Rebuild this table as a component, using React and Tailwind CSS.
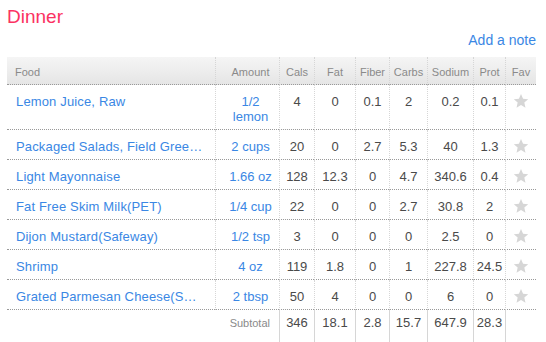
import React from "react";

const foods = [
  { name: "Lemon Juice, Raw", amount: "1/2 lemon", vals: ["4", "0", "0.1", "2", "0.2", "0.1"] },
  { name: "Packaged Salads, Field Gree…", amount: "2 cups", vals: ["20", "0", "2.7", "5.3", "40", "1.3"] },
  { name: "Light Mayonnaise", amount: "1.66 oz", vals: ["128", "12.3", "0", "4.7", "340.6", "0.4"] },
  { name: "Fat Free Skim Milk(PET)", amount: "1/4 cup", vals: ["22", "0", "0", "2.7", "30.8", "2"] },
  { name: "Dijon Mustard(Safeway)", amount: "1/2 tsp", vals: ["3", "0", "0", "0", "2.5", "0"] },
  { name: "Shrimp", amount: "4 oz", vals: ["119", "1.8", "0", "1", "227.8", "24.5"] },
  { name: "Grated Parmesan Cheese(S…", amount: "2 tbsp", vals: ["50", "4", "0", "0", "6", "0"] },
];

const subtotal = ["346", "18.1", "2.8", "15.7", "647.9", "28.3"];

const numCols = [
  { label: "Cals", w: "w-[35px]" },
  { label: "Fat", w: "w-[41px]" },
  { label: "Fiber", w: "w-[34px]" },
  { label: "Carbs", w: "w-[38px]" },
  { label: "Sodium", w: "w-[46px]" },
  { label: "Prot", w: "w-[32px]" },
];

function Star() {
  return (
    <svg width="16" height="16" viewBox="0 0 24 24" className="mx-auto block">
      <polygon
        points="12,1.5 15.1,8.6 22.8,9.3 17,14.4 18.7,22 12,18 5.3,22 7,14.4 1.2,9.3 8.9,8.6"
        fill="#d6d6d6"
      />
    </svg>
  );
}

export default function App() {
  const th = "h-[28px] border-b border-dotted border-b-[#999] pt-[3px] font-normal text-[11px] text-[#8a8a8a]";
  const td = "align-top pt-[9px] pb-[5px] leading-[15px] border-b border-dotted border-b-[#999]";
  const vline = "border-l border-l-[#d6d6d6]";

  return (
    <div className="w-[546px] h-[342px] overflow-hidden bg-white font-['Liberation_Sans',Arial,sans-serif]">
      <div className="pl-[7px] pt-[5px] text-[19px] leading-[24px] text-[#fb3262]">Dinner</div>
      <div className="mt-[3px] pr-[10px] text-right text-[14px] leading-[16px] text-[#3a87e4]">
        Add a note
      </div>
      <table className="ml-[7px] mt-[9px] w-[529px] table-fixed border-separate border-spacing-0">
        <thead>
          <tr className="bg-linear-to-b from-[#f5f5f5] to-[#e5e5e5]">
            <th className={`${th} w-[208px] pl-[8px] text-left`}>Food</th>
            <th className={`${th} ${vline} w-[64px] pl-[8px] pr-[2px] text-center`}>Amount</th>
            {numCols.map((c) => (
              <th key={c.label} className={`${th} ${vline} ${c.w} text-center`}>
                {c.label}
              </th>
            ))}
            <th className={`${th} ${vline} w-[31px] text-center`}>Fav</th>
          </tr>
        </thead>
        <tbody className="text-[13px]">
          {foods.map((f) => (
            <tr key={f.name}>
              <td className={`${td} pl-[9px] pr-[2px] text-[#3a87e4] whitespace-nowrap tracking-[0.15px]`}>
                {f.name}
              </td>
              <td className={`${td} ${vline} pl-[8px] pr-[2px] text-center text-[#3a87e4]`}>{f.amount}</td>
              {f.vals.map((v, i) => (
                <td key={i} className={`${td} ${vline} text-center text-[#4a4a4a] whitespace-nowrap`}>
                  {v}
                </td>
              ))}
              <td className={`${td} ${vline} !pt-[8px] !pb-[5px]`}>
                <Star />
              </td>
            </tr>
          ))}
          <tr>
            <td colSpan={2} className="align-top pt-[6px] pr-[9px] text-right text-[11px] leading-[15px] text-[#8a8a8a]">
              Subtotal
            </td>
            {subtotal.map((v, i) => (
              <td key={i} className={`${vline} align-top pt-[5px] pb-[12px] leading-[15px] text-center text-[#4a4a4a] whitespace-nowrap`}>
                {v}
              </td>
            ))}
            <td className={vline}></td>
          </tr>
        </tbody>
      </table>
    </div>
  );
}
